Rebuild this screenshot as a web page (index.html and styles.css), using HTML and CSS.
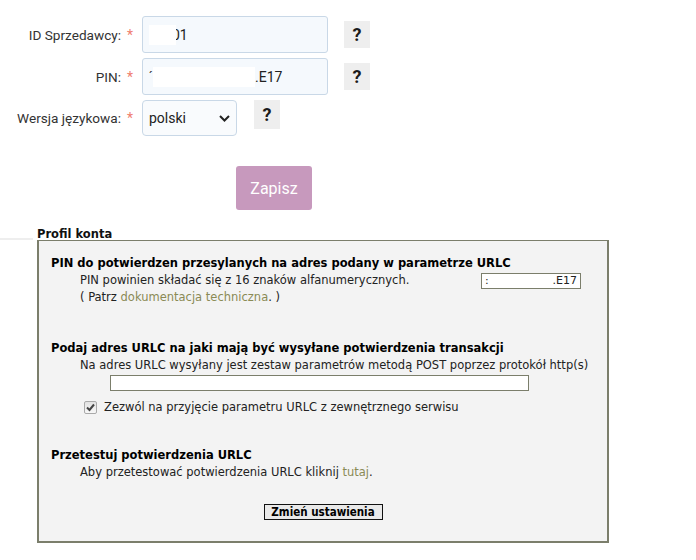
FILE: index.html
```html
<!DOCTYPE html>
<html lang="pl">
<head>
<meta charset="utf-8">
<title>Profil konta</title>
<link rel="stylesheet" href="styles.css">
</head>
<body>
<div class="form">
  <div class="row">
    <label class="lbl">ID Sprzedawcy:</label><span class="req">*</span>
    <div class="field"><span class="mask mask-id"></span><span class="val val-id">01</span></div>
    <span class="help">?</span>
  </div>
  <div class="row">
    <label class="lbl">PIN:</label><span class="req">*</span>
    <div class="field"><span class="tick">ˊ</span><span class="mask mask-pin"></span><span class="val">.E17</span></div>
    <span class="help">?</span>
  </div>
  <div class="row row-sel">
    <label class="lbl">Wersja językowa:</label><span class="req">*</span>
    <div class="select"><span>polski</span><svg class="chev" width="11" height="7" viewBox="0 0 11 7"><polyline points="1,1 5.5,5.5 10,1" fill="none" stroke="#222" stroke-width="2"/></svg></div>
    <span class="help help-sel">?</span>
  </div>
  <div class="actions"><button class="save" type="button">Zapisz</button></div>
</div>

<div class="section">
  <div class="sec-head"><span class="sec-line"></span><span class="sec-title">Profil konta</span></div>
  <div class="panel">
    <div class="h">PIN do potwierdzen przesylanych na adres podany w parametrze URLC</div>
    <div class="line pin-row">
      <span>PIN powinien składać się z 16 znaków alfanumerycznych.</span>
      <span class="small-input"><span>:</span><span>.E17</span></span>
    </div>
    <div class="line">( Patrz <a class="lnk" href="#">dokumentacja techniczna</a>. )</div>

    <div class="h h-gap">Podaj adres URLC na jaki mają być wysyłane potwierdzenia transakcji</div>
    <div class="line">Na adres URLC wysyłany jest zestaw parametrów metodą POST poprzez protokół http(s)</div>
    <div class="url-row"><span class="url-input"></span></div>
    <div class="chk-row">
      <span class="chk"><svg width="9" height="9" viewBox="0 0 9 9"><polyline points="1,4.5 3.5,7 8,1.5" fill="none" stroke="#444" stroke-width="2"/></svg></span>
      <span>Zezwól na przyjęcie parametru URLC z zewnętrznego serwisu</span>
    </div>

    <div class="h h-gap2">Przetestuj potwierdzenia URLC</div>
    <div class="line">Aby przetestować potwierdzenia URLC kliknij <a class="lnk" href="#">tutaj</a>.</div>

    <div class="btn-row"><button class="change" type="button">Zmień ustawienia</button></div>
  </div>
</div>
</body>
</html>
```

FILE: styles.css
```css
html, body {
  margin: 0;
  padding: 0;
  background: #fff;
}

.form {
  padding-top: 16px;
  font-family: Roboto, "Noto Sans", sans-serif;
  font-size: 14px;
  color: #333;
}

.row {
  display: flex;
  align-items: center;
  height: 37px;
  margin-bottom: 5px;
}

.row-sel {
  height: 36px;
  margin-top: 1px;
}

.lbl {
  width: 121px;
  text-align: right;
  font-size: 13.6px;
}

.req {
  width: 21px;
  box-sizing: border-box;
  padding-left: 6px;
  color: #ef7d6e;
}

.field {
  width: 186px;
  height: 37px;
  box-sizing: border-box;
  border: 1px solid #c9d8e7;
  border-radius: 3px;
  background: #f5f9fd;
  display: flex;
  align-items: center;
  padding-left: 6px;
  color: #222;
}

.mask {
  display: inline-block;
  height: 20px;
  background: #fff;
  position: relative;
  z-index: 1;
}

.mask-id {
  width: 27px;
}

.val-id {
  margin-left: -4px;
}

.mask-pin {
  width: 102px;
  margin-left: -1px;
}

.tick {
  font-size: 12px;
  width: 5px;
}

.help {
  width: 26px;
  height: 27px;
  margin-left: 16px;
  background: #eeeeee;
  display: flex;
  align-items: center;
  justify-content: center;
  font-weight: 700;
  font-size: 18px;
  color: #1a1a1a;
}

.help-sel {
  margin-left: 17px;
  height: 29px;
  align-self: flex-start;
}

.select {
  width: 95px;
  height: 36px;
  box-sizing: border-box;
  border: 1px solid #c9d8e7;
  border-radius: 4px;
  background: #f9fbfd;
  display: flex;
  align-items: center;
  justify-content: space-between;
  padding: 0 6px 0 6px;
  color: #222;
}

.actions {
  padding-left: 236px;
  margin-top: 30px;
}

.save {
  width: 76px;
  height: 44px;
  border: 0;
  border-radius: 3px;
  background: #c799bd;
  color: #fff;
  font-family: Roboto, "Noto Sans", sans-serif;
  font-size: 16px;
  padding: 0;
}

.section {
  margin-top: 16px;
  font-family: "DejaVu Sans", Verdana, sans-serif;
  font-size: 11.5px;
  color: #111;
}

.sec-head {
  display: flex;
  align-items: flex-end;
  height: 14px;
  line-height: 12px;
}

.sec-line {
  width: 33px;
  height: 2px;
  margin-bottom: 0;
  background: #eeeeee;
  margin-right: 4px;
}

.sec-title {
  font-weight: 700;
  font-size: 11.5px;
}

.panel {
  margin-left: 37px;
  width: 572px;
  box-sizing: border-box;
  border: 1px solid #7b7e6b;
  border-width: 1px 2px 2px 2px;
  background: #f3f3f3;
  padding: 14px 0 21px 12px;
  line-height: 17px;
}

.h {
  font-weight: 700;
  color: #000;
}

.h-gap {
  margin-top: 34px;
}

.h-gap2 {
  margin-top: 31px;
}

.line {
  padding-left: 29px;
  color: #222;
}

.pin-row {
  display: flex;
  align-items: center;
  justify-content: space-between;
  padding-right: 26px;
}

.small-input {
  width: 100px;
  height: 16px;
  box-sizing: border-box;
  border: 1px solid #7b7e6b;
  background: #fff;
  display: flex;
  justify-content: space-between;
  align-items: center;
  padding: 0 3px 0 3px;
  line-height: 14px;
  font-size: 11px;
}

.lnk {
  color: #8a8a55;
  text-decoration: none;
}

.url-row {
  padding-left: 59px;
  margin-top: 1px;
  height: 16px;
}

.url-input {
  display: block;
  width: 419px;
  height: 16px;
  box-sizing: border-box;
  border: 1px solid #7b7e6b;
  background: #fff;
}

.chk-row {
  display: flex;
  align-items: center;
  margin-top: 8px;
  padding-left: 33px;
  color: #222;
}

.chk {
  width: 13px;
  height: 13px;
  box-sizing: border-box;
  border: 1px solid #a9a9a9;
  border-radius: 2px;
  background: linear-gradient(#e2e2e2, #f7f7f7);
  display: flex;
  align-items: center;
  justify-content: center;
  margin-right: 7px;
}

.btn-row {
  display: flex;
  justify-content: center;
  margin-top: 23px;
  padding-right: 12px;
}

.change {
  width: 119px;
  height: 16px;
  padding: 0;
  border: 1px solid #111;
  background: #e9e9e9;
  font-family: "DejaVu Sans Condensed", "DejaVu Sans", Verdana, sans-serif;
  font-weight: 700;
  font-size: 11.5px;
  line-height: 14px;
  color: #000;
  border-radius: 0;
}
```
